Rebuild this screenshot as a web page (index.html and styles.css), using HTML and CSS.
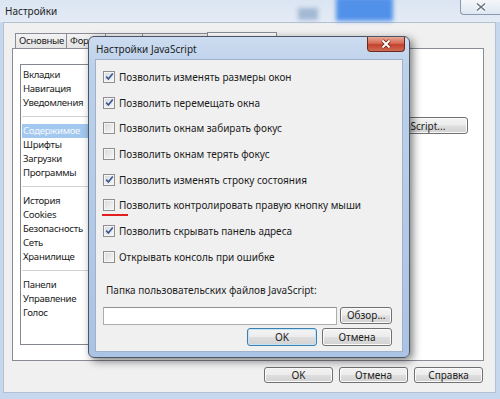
FILE: index.html
```html
<!DOCTYPE html>
<html lang="ru">
<head>
    <meta charset="UTF-8">
    <meta name="viewport" content="width=device-width, initial-scale=1.0">
    <title>Настройки</title>
    <link rel="stylesheet" href="styles.css">
</head>
<body>

    <div class="window">
        <div class="titlebar">
            <span class="title">Настройки</span>
            <div class="glass glass-grey"></div>
            <div class="glass glass-blue"></div>
            <button class="win-close">
                <svg width="12" height="10" viewBox="0 0 12 10"><path d="M2 1.5 L10 8.5 M10 1.5 L2 8.5" stroke="#fff" stroke-width="3.4"/><path d="M2 1.5 L10 8.5 M10 1.5 L2 8.5" stroke="#66717f" stroke-width="1.6"/></svg>
            </button>
        </div>

        <div class="client">
            <div class="tabs">
                <div class="tab">Основные</div>
                <div class="tab">Формы</div>
                <!-- the other tabs sit under the dialog -->
                <div class="tab tab-hidden"></div>
                <div class="tab tab-hidden wide"></div>
                <div class="tab active"></div>
            </div>

            <div class="tab-page">
                <ul class="nav-list">
                    <li>Вкладки</li>
                    <li>Навигация</li>
                    <li>Уведомления</li>
                    <li class="sep"></li>
                    <li class="selected">Содержимое</li>
                    <li>Шрифты</li>
                    <li>Загрузки</li>
                    <li>Программы</li>
                    <li class="sep"></li>
                    <li>История</li>
                    <li>Cookies</li>
                    <li>Безопасность</li>
                    <li>Сеть</li>
                    <li>Хранилище</li>
                    <li class="sep"></li>
                    <li>Панели</li>
                    <li>Управление</li>
                    <li>Голос</li>
                </ul>
                <div class="page-content">
                    <button class="btn js-btn">Настройки JavaScript...</button>
                </div>
            </div>

            <div class="footer">
                <button class="btn">OK</button>
                <button class="btn">Отмена</button>
                <button class="btn">Справка</button>
            </div>
        </div>
    </div>

    <!-- modal dialog on top of the settings window -->
    <div class="dialog">
        <div class="dialog-title">
            <span>Настройки JavaScript</span>
            <button class="dlg-close">
                <svg width="12" height="10" viewBox="0 0 12 10"><path d="M2.5 1.5 L9.5 8.5 M9.5 1.5 L2.5 8.5" stroke="#6e2417" stroke-width="3.6"/><path d="M2.5 1.5 L9.5 8.5 M9.5 1.5 L2.5 8.5" stroke="#fff" stroke-width="1.9"/></svg>
            </button>
        </div>
        <div class="dialog-body">
            <label class="check-row"><span class="checkbox checked"><svg width="9" height="9" viewBox="0 0 9 9"><path d="M1.2 4.6 L3.4 7 L7.8 1.4" fill="none" stroke="#3b5695" stroke-width="1.6"/></svg></span>Позволить изменять размеры окон</label>
            <label class="check-row"><span class="checkbox checked"><svg width="9" height="9" viewBox="0 0 9 9"><path d="M1.2 4.6 L3.4 7 L7.8 1.4" fill="none" stroke="#3b5695" stroke-width="1.6"/></svg></span>Позволить перемещать окна</label>
            <label class="check-row"><span class="checkbox"></span>Позволить окнам забирать фокус</label>
            <label class="check-row"><span class="checkbox"></span>Позволить окнам терять фокус</label>
            <label class="check-row"><span class="checkbox checked"><svg width="9" height="9" viewBox="0 0 9 9"><path d="M1.2 4.6 L3.4 7 L7.8 1.4" fill="none" stroke="#3b5695" stroke-width="1.6"/></svg></span>Позволить изменять строку состояния</label>
            <label class="check-row"><span class="checkbox"></span>Позволить контролировать правую кнопку мыши</label>
            <label class="check-row"><span class="checkbox checked"><svg width="9" height="9" viewBox="0 0 9 9"><path d="M1.2 4.6 L3.4 7 L7.8 1.4" fill="none" stroke="#3b5695" stroke-width="1.6"/></svg></span>Позволить скрывать панель адреса</label>
            <label class="check-row"><span class="checkbox"></span>Открывать консоль при ошибке</label>
            <div class="marker"></div>

            <div class="folder-label">Папка пользовательских файлов JavaScript:</div>
            <div class="folder-row">
                <input class="text-input" type="text">
                <button class="btn browse">Обзор...</button>
            </div>
            <div class="dialog-buttons">
                <button class="btn btn-default">OK</button>
                <button class="btn">Отмена</button>
            </div>
        </div>
    </div>

</body>
</html>
```

FILE: styles.css
```css
* {
    margin: 0;
    padding: 0;
    box-sizing: border-box;
}

body {
    width: 500px;
    height: 399px;
    overflow: hidden;
    position: relative;
    background: #c6d8ee;
    font-family: 'Noto Sans', 'Open Sans', sans-serif;
    font-size: 10px;
    color: #1c1c1c;
}

.window {
    height: 399px;
    display: flex;
    flex-direction: column;
}

/* outer window caption */
.titlebar {
    position: relative;
    height: 22px;
    display: flex;
    align-items: center;
    padding-left: 5px;
    background: linear-gradient(#dbe5f2, #e3ebf5);
}

.title {
    font-size: 10px;
    color: #1e1e1e;
}

.glass {
    position: absolute;
    filter: blur(2px);
}

.glass-grey {
    left: 298px;
    top: 8px;
    width: 20px;
    height: 12px;
    background: #a3b8d4;
}

.glass-blue {
    left: 336px;
    top: -3px;
    width: 57px;
    height: 24px;
    background: #5291ea;
}

.win-close {
    margin-left: auto;
    align-self: flex-start;
    width: 40px;
    height: 15px;
    display: flex;
    align-items: center;
    justify-content: center;
    border: 1px solid #8898ad;
    border-top: none;
    border-right: none;
    border-radius: 0 0 0 4px;
    background: linear-gradient(#f3f6fa, #dfe7f1);
}

.client {
    height: 371px;
    margin: 0 4px 0 3px;
    padding: 10px 0 0 8px;
    background: #f0f0f0;
    border: 1px solid #b3c1d3;
}

/* tabs */
.tabs {
    display: flex;
    align-items: flex-end;
    height: 15px;
    margin-left: 3px;
    font-size: 9.6px;
    letter-spacing: -0.3px;
}

.tab {
    height: 15px;
    padding: 0 2px 0 3px;
    line-height: 14px;
    border: 1px solid #898c95;
    border-bottom: none;
    margin-right: -1px;
    background: linear-gradient(#f3f3f3, #e4e4e4);
}

.tab-hidden {
    width: 38px;
}

.tab-hidden.wide {
    width: 66px;
}

.tab.active {
    width: 70px;
    height: 17px;
    margin-bottom: -1px;
    background: #fff;
    position: relative;
}

.tab-page {
    width: 472px;
    height: 313px;
    display: flex;
    background: #fff;
    border: 1px solid #898c95;
}

.nav-list {
    list-style: none;
    width: 122px;
    height: 281px;
    margin: 15px 0 0 7px;
    padding: 3px 1px;
    border: 1px solid #828790;
    font-size: 9.6px;
    letter-spacing: -0.3px;
}

.nav-list li {
    height: 14px;
    line-height: 14px;
    padding-left: 1px;
    white-space: nowrap;
}

.nav-list li.selected {
    background: #a3c8ef;
    color: #f4f8fd;
}

.nav-list li.sep {
    background: linear-gradient(transparent 6px, #d2d2d2 6px, #d2d2d2 7px, transparent 7px);
}

.page-content {
    flex: 1;
    display: flex;
    flex-direction: column;
    align-items: flex-end;
    padding: 68px 15px 0 0;
}

/* buttons */
.btn {
    font-family: inherit;
    font-size: 10px;
    color: #1c1c1c;
    height: 17px;
    border: 1px solid #707070;
    border-radius: 3px;
    background: linear-gradient(#f4f4f4 0%, #ececec 48%, #dedede 52%, #d2d2d2 100%);
    box-shadow: inset 0 0 0 1px #fbfbfb;
    cursor: default;
}

.js-btn {
    width: 154px;
}

.footer {
    width: 472px;
    display: flex;
    justify-content: flex-end;
    gap: 6px;
    margin-top: 6px;
    padding-right: 1px;
}

.footer .btn {
    width: 69px;
    height: 16px;
}

/* JavaScript dialog */
.dialog {
    position: absolute;
    left: 88px;
    top: 36px;
    width: 322px;
    height: 322px;
    padding: 0 6px 5px 6px;
    border: 1px solid #4b5563;
    border-radius: 6px;
    background: linear-gradient(#cddcf0, #bcd1ea 30px, #abc3e4);
    box-shadow: 3px 3px 9px rgba(0, 0, 0, 0.5);
}

.dialog-title {
    height: 22px;
    display: flex;
    align-items: center;
    padding-left: 1px;
    padding-top: 1px;
    font-size: 10px;
    color: #1e1e1e;
}

.dlg-close {
    position: absolute;
    top: 0;
    right: 4px;
    width: 38px;
    height: 15px;
    display: flex;
    align-items: center;
    justify-content: center;
    border: 1px solid #6a2a20;
    border-top: none;
    border-radius: 0 0 4px 4px;
    background: linear-gradient(#e9a897, #d66a55 45%, #c2422d 55%, #d06c55);
}

.dialog-body {
    position: relative;
    height: 293px;
    padding: 4px 10px 0 7px;
    background: #f0f0f0;
    border: 1px solid #9fb2ca;
}

.check-row {
    height: 25.7px;
    display: flex;
    align-items: center;
    white-space: nowrap;
}

.checkbox {
    width: 12px;
    height: 12px;
    margin-right: 4px;
    display: flex;
    align-items: center;
    justify-content: center;
    border: 1px solid #8e8f8f;
    background: linear-gradient(135deg, #d6d8db, #f8f8f8);
    box-shadow: inset 0 0 0 1px #f6f6f6;
}

.marker {
    position: absolute;
    left: 6px;
    top: 154px;
    width: 26px;
    height: 2px;
    background: #e11f1f;
}

.folder-label {
    height: 14px;
    line-height: 14px;
    margin-top: 13px;
    padding-left: 3px;
}

.folder-row {
    display: flex;
    gap: 3px;
    margin-top: 10px;
}

.text-input {
    width: 236px;
    height: 18px;
    border: 1px solid #abadb3;
    border-top-color: #8e9196;
    background: #fff;
}

.browse {
    width: 52px;
}

.dialog-buttons {
    display: flex;
    justify-content: flex-end;
    gap: 5px;
    margin-top: 3px;
}

.dialog-buttons .btn {
    width: 70px;
    height: 18px;
}

.btn-default {
    border-color: #3c7fb1;
    box-shadow: inset 0 0 0 1px #c4e5f7;
}
```
